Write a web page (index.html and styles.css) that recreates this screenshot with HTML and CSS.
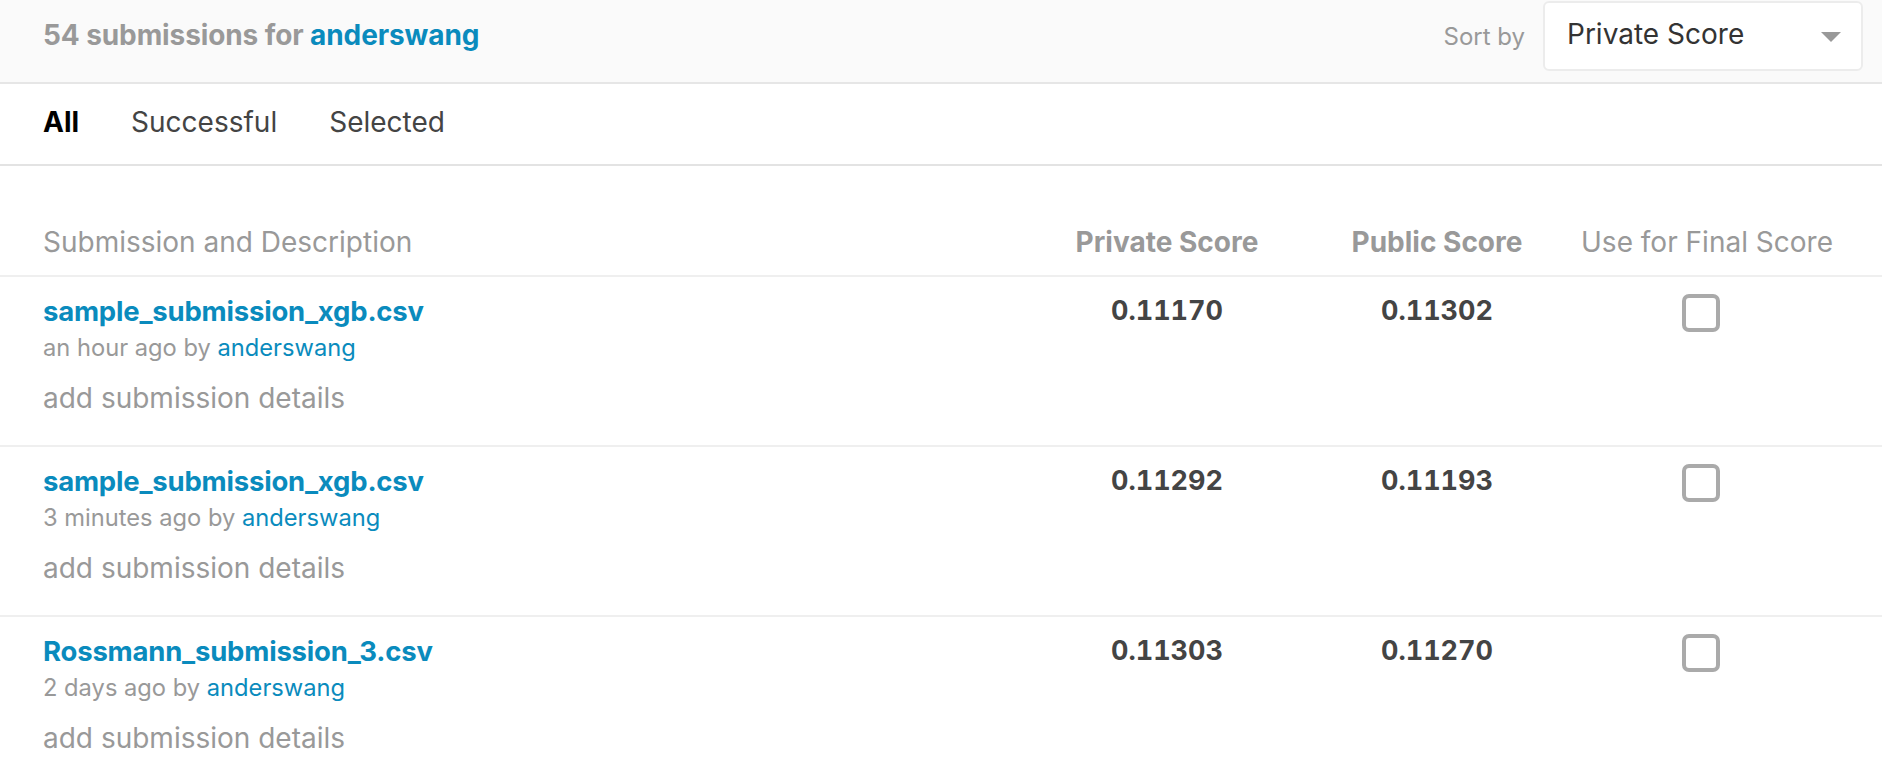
FILE: index.html
```html
<!DOCTYPE html>
<html lang="en">
<head>
<meta charset="utf-8">
<title>Submissions</title>
<link rel="stylesheet" href="styles.css">
</head>
<body>
<div class="page">
  <header class="top">
    <h1 class="count">54 submissions for <a class="user" href="#">anderswang</a></h1>
    <div class="sort">
      <span class="sort-label">Sort by</span>
      <div class="select">
        <span class="select-value">Private Score</span>
        <span class="caret"></span>
      </div>
    </div>
  </header>
  <nav class="tabs">
    <a class="tab active" href="#">All</a>
    <a class="tab" href="#">Successful</a>
    <a class="tab" href="#">Selected</a>
  </nav>
  <div class="table">
    <div class="row head">
      <div class="cell desc">Submission and Description</div>
      <div class="cell score-h">Private Score</div>
      <div class="cell score-h">Public Score</div>
      <div class="cell final-h">Use for Final Score</div>
    </div>
    <div class="row">
      <div class="cell desc">
        <a class="file" href="#">sample_submission_xgb.csv</a>
        <div class="meta">an hour ago by <a class="user-link" href="#">anderswang</a></div>
        <div class="details">add submission details</div>
      </div>
      <div class="cell score">0.11170</div>
      <div class="cell score">0.11302</div>
      <div class="cell final"><span class="check"></span></div>
    </div>
    <div class="row">
      <div class="cell desc">
        <a class="file" href="#">sample_submission_xgb.csv</a>
        <div class="meta">3 minutes ago by <a class="user-link" href="#">anderswang</a></div>
        <div class="details">add submission details</div>
      </div>
      <div class="cell score">0.11292</div>
      <div class="cell score">0.11193</div>
      <div class="cell final"><span class="check"></span></div>
    </div>
    <div class="row">
      <div class="cell desc">
        <a class="file" href="#">Rossmann_submission_3.csv</a>
        <div class="meta">2 days ago by <a class="user-link" href="#">anderswang</a></div>
        <div class="details">add submission details</div>
      </div>
      <div class="cell score">0.11303</div>
      <div class="cell score">0.11270</div>
      <div class="cell final"><span class="check"></span></div>
    </div>
  </div>
</div>
</body>
</html>
```

FILE: styles.css
```css
* { box-sizing: border-box; }
html, body { margin: 0; padding: 0; background: #fff; }
body {
  font-family: Inter, "Noto Sans", "Liberation Sans", sans-serif;
  color: #333;
  overflow: hidden;
}
a { text-decoration: none; }

.top {
  display: flex;
  align-items: center;
  justify-content: space-between;
  height: 84px;
  padding: 1px 19px 11px 43px;
  background: #fafafa;
  border-bottom: 2px solid #e6e6e6;
}
.count {
  margin: 0 0 2px;
  font-size: 28px;
  font-weight: 700;
  color: #999;
  letter-spacing: -0.1px;
}
.user { color: #0a8bbd; }
.sort { display: flex; align-items: center; gap: 18px; }
.sort-label { font-size: 24px; color: #999; }
.select {
  position: relative;
  width: 320px;
  height: 70px;
  display: flex;
  align-items: center;
  padding: 0 0 4px 22px;
  background: #fff;
  border: 2px solid #ececec;
  border-radius: 6px;
}
.select-value { font-size: 28px; color: #333; }
.caret {
  position: absolute;
  right: 20px;
  top: 29px;
  width: 0;
  height: 0;
  border-left: 10px solid transparent;
  border-right: 10px solid transparent;
  border-top: 10px solid #999;
}

.tabs {
  display: flex;
  gap: 52px;
  height: 82px;
  padding: 20px 0 0 43px;
  border-bottom: 2px solid #e3e3e3;
}
.tab { font-size: 28px; color: #444; line-height: 36px; }
.tab.active { color: #000; font-weight: 700; }

.row {
  display: grid;
  grid-template-columns: 1fr 270px 270px 270px;
  padding-right: 40px;
  height: 170px;
  border-bottom: 2px solid #efefef;
}
.row.head {
  height: 111px;
  align-items: end;
  padding-bottom: 15px;
}
.cell { padding-left: 43px; }
.row .cell:not(.desc) { padding-left: 0; text-align: center; }
.head .cell { font-size: 28px; color: #999; line-height: 36px; }
.head .score-h { font-weight: 700; }

.desc { padding-top: 16px; }
.file {
  display: block;
  font-size: 27.5px;
  font-weight: 700;
  color: #0a8bbd;
  line-height: 36px;
  letter-spacing: -0.2px;
}
.meta { font-size: 23.7px; color: #999; line-height: 37px; }
.user-link { color: #0a8bbd; }
.details { font-size: 28px; color: #999; line-height: 36px; margin-top: 14px; }
.score {
  padding-top: 16px;
  font-size: 27px;
  font-weight: 700;
  color: #444;
  line-height: 36px;
  font-variant-numeric: tabular-nums;
}
.final { display: flex; justify-content: center; padding-top: 17px; }
.check {
  display: block;
  width: 38px;
  height: 38px;
  margin-right: 12px;
  border: 4px solid #aaa;
  border-radius: 7px;
}
```
